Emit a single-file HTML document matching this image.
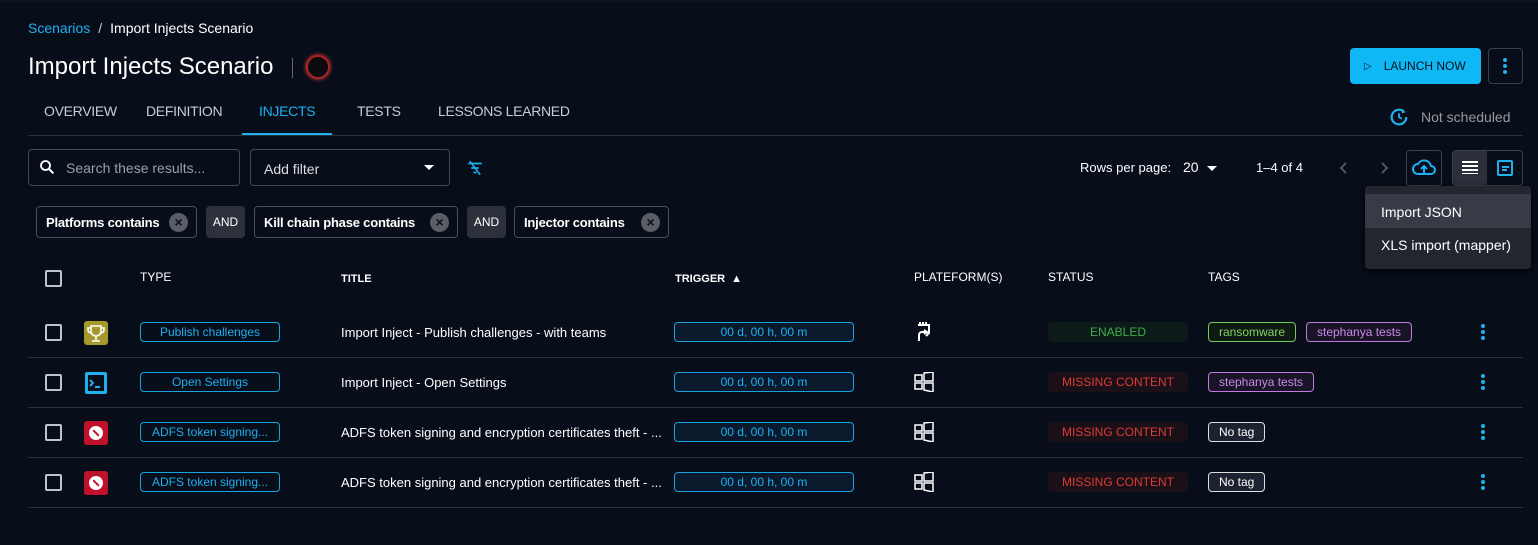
<!DOCTYPE html>
<html><head><meta charset="utf-8"><style>
*{box-sizing:border-box;margin:0;padding:0}
body{width:1538px;height:545px;background:#070d19;color:#fff;font-family:"Liberation Sans",sans-serif;position:relative;overflow:hidden;font-size:14px}
.a{position:absolute}
.bc{left:28px;top:20px;font-size:14px}
.title{left:28px;top:53px;font-size:24px;font-weight:500}
.tab{top:103px;font-size:14px;color:#c9ccd2;letter-spacing:-.3px}
.line{height:1px;background:#2a2f3a}
.box{border:1px solid #3a3f4a;border-radius:4px}
.chip{top:206px;height:32px;border:1px solid #4a4f5a;border-radius:4px;font-weight:bold;font-size:13px;display:flex;align-items:center;padding-left:9px;letter-spacing:-.2px}
.x{position:absolute;right:8px;top:6px;width:19px;height:19px;border-radius:50%;background:#5a5e66;color:#0a0f19;font-size:14px;text-align:center;line-height:19px;font-weight:bold}
.and{top:206px;height:32px;width:39px;background:#2c313b;border-radius:4px;font-size:12px;display:flex;align-items:center;justify-content:center}
.hd{top:270px;font-size:12px}
.cb{width:17px;height:17px;border:2px solid #c0c3c8;border-radius:2px}
.tc{height:20px;border:1px solid #1aa3e0;border-radius:4px;color:#1fb0f0;font-size:12px;text-align:center;line-height:18px}
.tr{height:20px;border:1px solid #1aa3e0;border-radius:4px;color:#1fb0f0;font-size:12px;text-align:center;line-height:18px;background:#0a1a2c;width:180px;left:674px}
.st{left:1048px;width:140px;height:20px;border-radius:4px;font-size:12px;text-align:center;line-height:20px}
.tag{height:20px;border-radius:4px;font-size:12px;line-height:18px;padding:0 10px;border:1px solid}
.keb{left:1481px;width:4px}
.keb i{display:block;width:4px;height:4px;border-radius:50%;background:#1fb0f0;margin-bottom:2px}
.rt{left:341px;font-size:13px}
</style></head><body>
<div class="a" style="left:0;top:0;width:1538px;height:2px;background:#0e131d"></div>
<div class="a bc"><span style="color:#1fb0f0">Scenarios</span><span style="color:#ccc;margin:0 8px">/</span>Import Injects Scenario</div>
<div class="a title">Import Injects Scenario</div>
<div class="a" style="left:292px;top:58px;width:1px;height:20px;background:#666"></div>
<div class="a" style="left:306px;top:55px;width:24px;height:24px;border-radius:50%;background:#0a0a10;border:2px solid #a22;box-shadow:0 0 4px #e44"></div>
<div class="a" style="left:1350px;top:48px;width:131px;height:36px;background:#0fb8f5;border-radius:4px;color:#06121e;font-size:12px;display:flex;align-items:center;padding-left:14px"><span style="font-size:10px;margin-right:12px">▷</span>LAUNCH NOW</div>
<div class="a box" style="left:1488px;top:48px;width:35px;height:36px"><div class="keb a" style="left:14px;top:9px"><i></i><i></i><i></i></div></div>
<div class="a tab" style="left:44px">OVERVIEW</div>
<div class="a tab" style="left:146px">DEFINITION</div>
<div class="a tab" style="left:259px;color:#1fb0f0">INJECTS</div>
<div class="a tab" style="left:357px">TESTS</div>
<div class="a tab" style="left:438px">LESSONS LEARNED</div>
<div class="a line" style="left:28px;top:135px;width:1495px"></div>
<div class="a" style="left:242px;top:133px;width:90px;height:2px;background:#1fb0f0"></div>
<svg class="a" style="left:1388px;top:106px" width="22" height="22" viewBox="0 0 24 24"><path d="M20 12a8 8 0 1 1-3-6.2" fill="none" stroke="#1fb0f0" stroke-width="2.4"/><path d="M16 3l3 4-4 1z" fill="#1fb0f0"/><path d="M12 8v4l3 2" fill="none" stroke="#1fb0f0" stroke-width="2"/></svg>
<div class="a" style="left:1421px;top:109px;color:#999;font-size:14px">Not scheduled</div>
<div class="a box" style="left:28px;top:149px;width:212px;height:37px;border-color:#444a55"></div>
<svg class="a" style="left:38px;top:158px" width="18" height="18" viewBox="0 0 24 24"><circle cx="10" cy="10" r="6" fill="none" stroke="#fff" stroke-width="2.4"/><path d="M14.5 14.5l6 6" stroke="#fff" stroke-width="2.6"/></svg>
<div class="a" style="left:66px;top:160px;color:#9aa0a8;font-size:14px">Search these results...</div>
<div class="a box" style="left:250px;top:149px;width:200px;height:37px;border-color:#444a55"></div>
<div class="a" style="left:264px;top:161px;color:#ddd;font-size:14px">Add filter</div>
<div class="a" style="left:424px;top:165px;width:0;height:0;border-left:5px solid transparent;border-right:5px solid transparent;border-top:5px solid #fff"></div>
<svg class="a" style="left:466px;top:159px" width="18" height="18" viewBox="0 0 24 24"><path d="M3 6h18M7 12h10M10 18h4" stroke="#1fb0f0" stroke-width="2.2"/><path d="M5 3l14 18" stroke="#1fb0f0" stroke-width="2"/></svg>
<div class="a" style="left:1080px;top:160px;font-size:13px">Rows per page:</div>
<div class="a" style="left:1183px;top:159px;font-size:14px">20</div>
<div class="a" style="left:1207px;top:166px;border-left:5px solid transparent;border-right:5px solid transparent;border-top:5px solid #fff"></div>
<div class="a" style="left:1256px;top:160px;font-size:13px">1–4 of 4</div>
<svg class="a" style="left:1338px;top:160px" width="12" height="16" viewBox="0 0 12 16"><path d="M8 3L3 8l5 5" fill="none" stroke="#555" stroke-width="2"/></svg>
<svg class="a" style="left:1378px;top:160px" width="12" height="16" viewBox="0 0 12 16"><path d="M4 3l5 5-5 5" fill="none" stroke="#555" stroke-width="2"/></svg>
<div class="a box" style="left:1406px;top:150px;width:36px;height:36px"></div>
<svg class="a" style="left:1412px;top:157px" width="24" height="22" viewBox="0 0 24 22"><path d="M6 17a5 5 0 0 1 0-10 7 7 0 0 1 13 2 4 4 0 0 1 0 8z" fill="none" stroke="#1fb0f0" stroke-width="2"/><path d="M12 16v-6M9 12l3-3 3 3" fill="none" stroke="#1fb0f0" stroke-width="2"/></svg>
<div class="a box" style="left:1452px;top:150px;width:71px;height:36px"></div>
<div class="a" style="left:1453px;top:151px;width:34px;height:34px;background:#2a2f3a"></div>
<div class="a" style="left:1462px;top:161px;width:16px;height:13px;background:repeating-linear-gradient(#fff 0 2px,transparent 2px 4px)"></div>
<div class="a" style="left:1497px;top:160px;width:16px;height:16px;border:2px solid #1fb0f0;border-radius:2px"><div class="a" style="left:3px;top:4px;width:7px;height:2px;background:#1fb0f0"></div><div class="a" style="left:3px;top:7px;width:5px;height:2px;background:#1fb0f0"></div></div>
<div class="a" style="left:1365px;top:186px;width:166px;height:83px;background:#22262f;border-radius:4px;box-shadow:0 2px 6px #000">
<div style="margin-top:8px;height:34px;background:#363b46;padding:10px 0 0 16px;font-size:14px">Import JSON</div>
<div style="padding:9px 0 0 16px;font-size:14px">XLS import (mapper)</div></div>
<div class="a chip" style="left:36px;width:161px">Platforms contains<span class="x">×</span></div>
<div class="a and" style="left:206px">AND</div>
<div class="a chip" style="left:254px;width:204px">Kill chain phase contains<span class="x">×</span></div>
<div class="a and" style="left:467px">AND</div>
<div class="a chip" style="left:514px;width:155px">Injector contains<span class="x">×</span></div>
<div class="a cb" style="left:45px;top:270px"></div>
<div class="a hd" style="left:140px">TYPE</div>
<div class="a hd" style="left:341px;top:273px;font-weight:bold;font-size:11px">TITLE</div>
<div class="a hd" style="left:675px;top:273px;font-weight:bold;font-size:11px">TRIGGER <span style="font-size:11px;margin-left:3px">▲</span></div>
<div class="a hd" style="left:914px">PLATEFORM(S)</div>
<div class="a hd" style="left:1048px">STATUS</div>
<div class="a hd" style="left:1208px">TAGS</div>

<div class="a line" style="left:28px;top:357px;width:1495px"></div>
<div class="a line" style="left:28px;top:407px;width:1495px"></div>
<div class="a line" style="left:28px;top:457px;width:1495px"></div>
<div class="a line" style="left:28px;top:507px;width:1495px"></div>

<div class="a cb" style="left:45px;top:324px"></div>
<div class="a" style="left:84px;top:321px;width:24px;height:24px;background:#a59a2a;border-radius:3px"><svg width="24" height="24" viewBox="0 0 24 24"><path d="M7 5h10v5a5 5 0 0 1-10 0zM7 7H4v2a3 3 0 0 0 3 3M17 7h3v2a3 3 0 0 1-3 3M12 15v4M8 20h8" fill="none" stroke="#fff" stroke-width="1.6"/></svg></div>
<div class="a tc" style="left:140px;top:322px;width:140px">Publish challenges</div>
<div class="a rt" style="top:325px">Import Inject - Publish challenges - with teams</div>
<div class="a tr" style="top:322px">00 d, 00 h, 00 m</div>
<svg class="a" style="left:914px;top:321px" width="20" height="22" viewBox="0 0 20 22"><path d="M6 1v3M9 1v3M12 1v3M4 4h11v8l-3 3M5 20v-6a3 3 0 0 1 3-3h4M10 9l3 2-3 2" fill="none" stroke="#fff" stroke-width="2"/></svg>
<div class="a st" style="top:322px;background:#0c1a1a;color:#3fae4a">ENABLED</div>
<div class="a tag" style="left:1208px;top:322px;border-color:#74c95a;color:#7fd166;background:#0f1a12">ransomware</div>
<div class="a tag" style="left:1306px;top:322px;border-color:#c27adf;color:#c98ae6;background:#1a1428">stephanya tests</div>
<div class="a keb" style="top:324px"><i></i><i></i><i></i></div>

<div class="a cb" style="left:45px;top:374px"></div>
<div class="a" style="left:85px;top:372px;width:22px;height:22px;background:#1fb0f0;border-radius:2px"><div class="a" style="left:3px;top:3px;width:16px;height:16px;background:#070d19"></div><svg class="a" style="left:3px;top:3px" width="16" height="16" viewBox="0 0 16 16"><path d="M2 5l3 3-3 3M7 12h5" fill="none" stroke="#1fb0f0" stroke-width="2"/></svg></div>
<div class="a tc" style="left:140px;top:372px;width:140px">Open Settings</div>
<div class="a rt" style="top:375px">Import Inject - Open Settings</div>
<div class="a tr" style="top:372px">00 d, 00 h, 00 m</div>
<div class="a st" style="top:372px;background:#1a1018;color:#e03a36">MISSING CONTENT</div>
<div class="a tag" style="left:1208px;top:372px;border-color:#c27adf;color:#c98ae6;background:#1a1428">stephanya tests</div>
<div class="a keb" style="top:374px"><i></i><i></i><i></i></div>

<div class="a cb" style="left:45px;top:424px"></div>
<div class="a tc" style="left:140px;top:422px;width:140px">ADFS token signing...</div>
<div class="a rt" style="top:425px">ADFS token signing and encryption certificates theft - ...</div>
<div class="a tr" style="top:422px">00 d, 00 h, 00 m</div>
<div class="a st" style="top:422px;background:#1a1018;color:#e03a36">MISSING CONTENT</div>
<div class="a tag" style="left:1208px;top:422px;border-color:#ddd;color:#fff;background:#1c2230">No tag</div>
<div class="a keb" style="top:424px"><i></i><i></i><i></i></div>

<div class="a cb" style="left:45px;top:474px"></div>
<div class="a tc" style="left:140px;top:472px;width:140px">ADFS token signing...</div>
<div class="a rt" style="top:475px">ADFS token signing and encryption certificates theft - ...</div>
<div class="a tr" style="top:472px">00 d, 00 h, 00 m</div>
<div class="a st" style="top:472px;background:#1a1018;color:#e03a36">MISSING CONTENT</div>
<div class="a tag" style="left:1208px;top:472px;border-color:#ddd;color:#fff;background:#1c2230">No tag</div>
<div class="a keb" style="top:474px"><i></i><i></i><i></i></div>

<div class="a" style="left:84px;top:421px;width:24px;height:24px;background:#c0112b;border-radius:3px"><div class="a" style="left:5px;top:5px;width:14px;height:14px;border-radius:50%;background:#fff"><div class="a" style="left:3px;top:6px;width:8px;height:2px;background:#c0112b;transform:rotate(45deg)"></div></div></div>
<div class="a" style="left:84px;top:471px;width:24px;height:24px;background:#c0112b;border-radius:3px"><div class="a" style="left:5px;top:5px;width:14px;height:14px;border-radius:50%;background:#fff"><div class="a" style="left:3px;top:6px;width:8px;height:2px;background:#c0112b;transform:rotate(45deg)"></div></div></div>

<svg class="a" style="left:914px;top:372px" width="20" height="20" viewBox="0 0 20 20"><path d="M1 3h7v6H1zM10 1l9-1v9h-9zM1 11h7v6H1zM10 11h9v9l-9-2z" fill="none" stroke="#fff" stroke-width="1.5"/></svg>
<svg class="a" style="left:914px;top:422px" width="20" height="20" viewBox="0 0 20 20"><path d="M1 3h7v6H1zM10 1l9-1v9h-9zM1 11h7v6H1zM10 11h9v9l-9-2z" fill="none" stroke="#fff" stroke-width="1.5"/></svg>
<svg class="a" style="left:914px;top:472px" width="20" height="20" viewBox="0 0 20 20"><path d="M1 3h7v6H1zM10 1l9-1v9h-9zM1 11h7v6H1zM10 11h9v9l-9-2z" fill="none" stroke="#fff" stroke-width="1.5"/></svg>
</body></html>
